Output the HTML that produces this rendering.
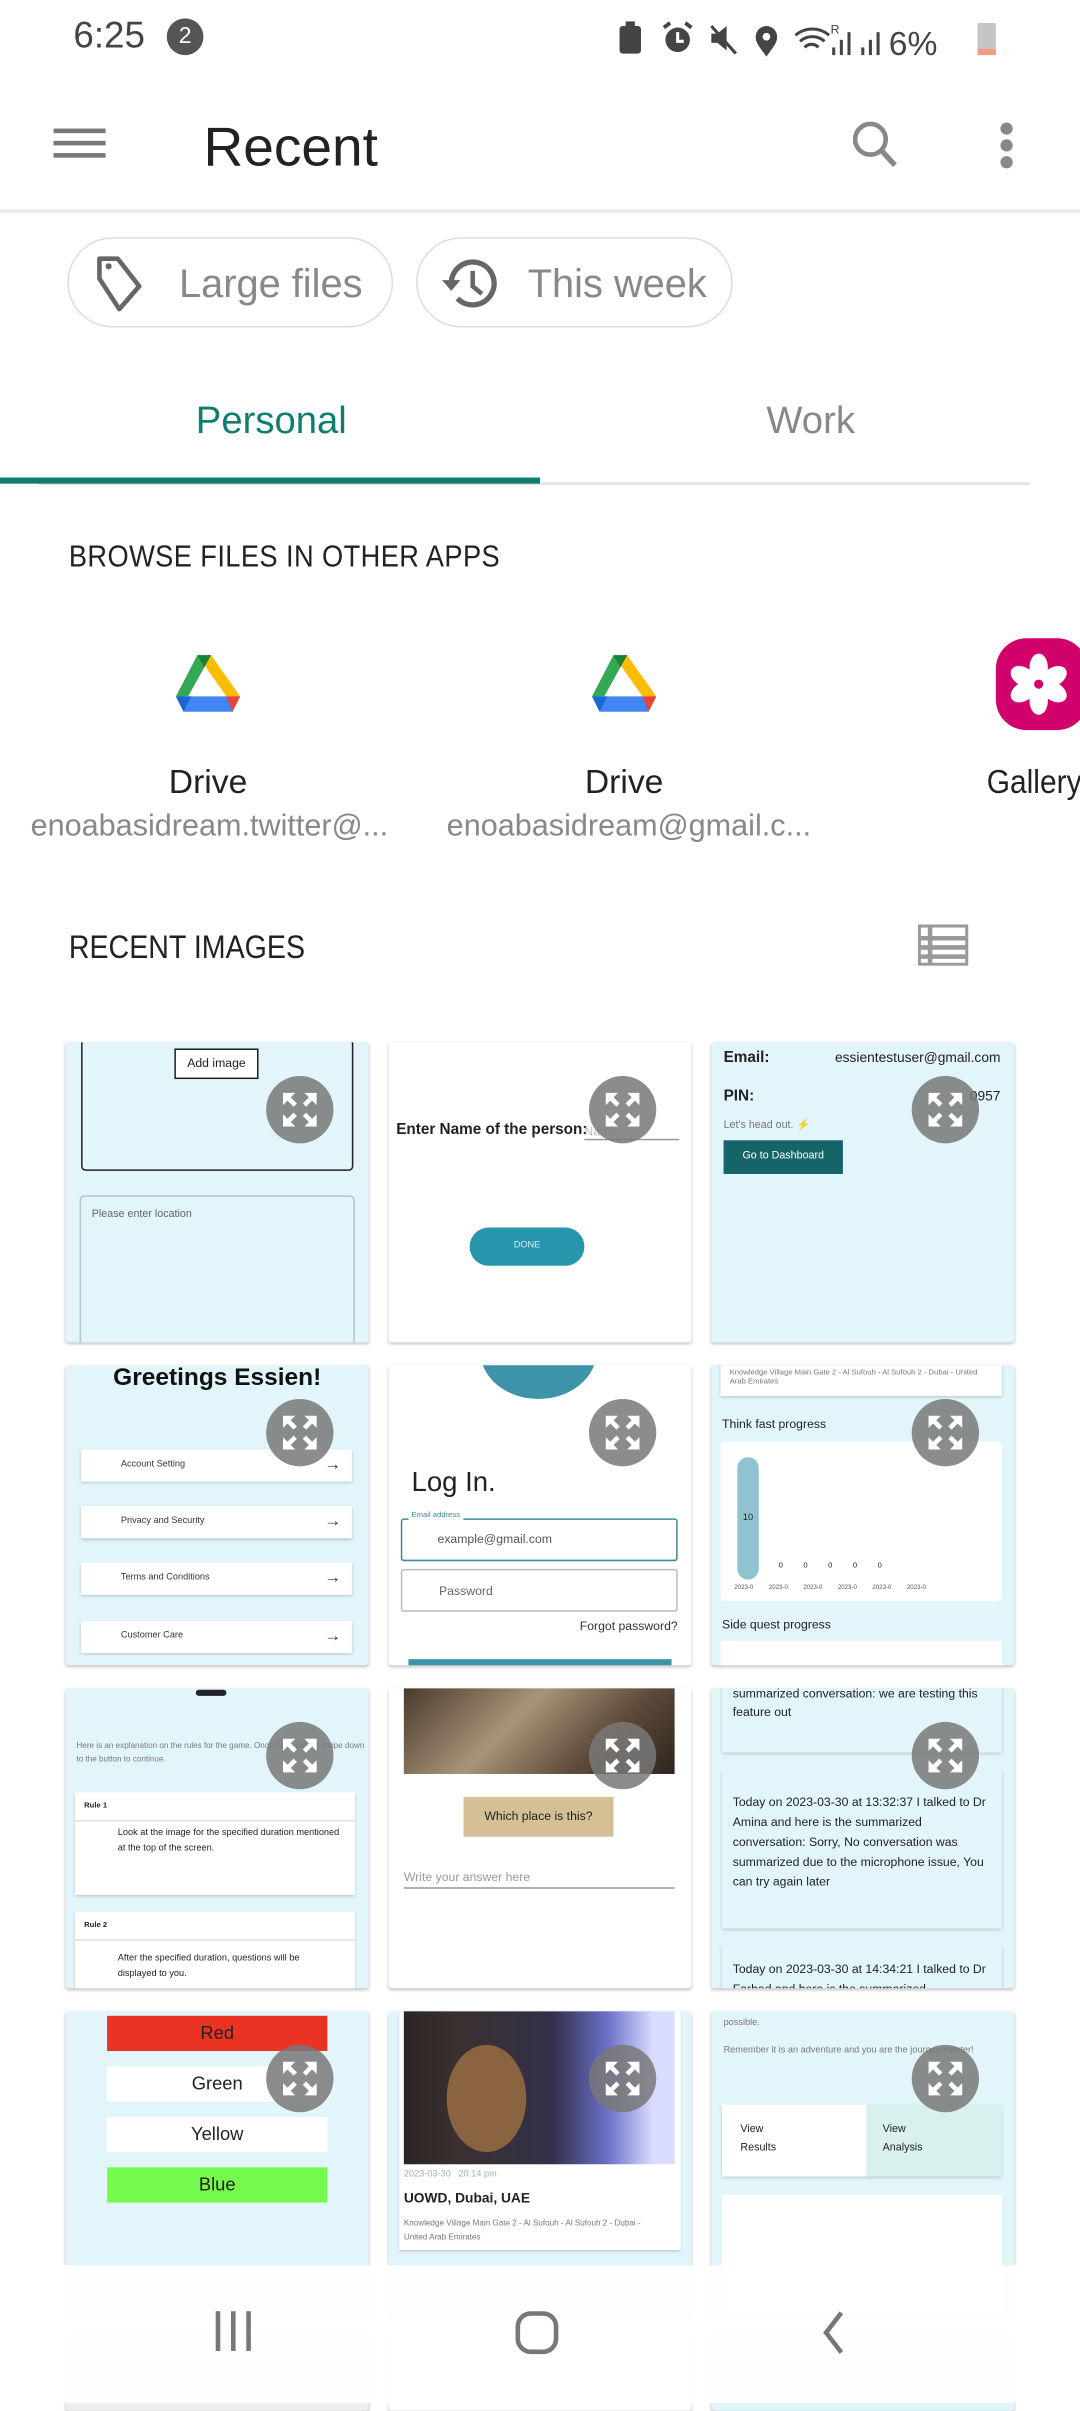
<!DOCTYPE html>
<html><head><meta charset="utf-8">
<style>
*{margin:0;padding:0;box-sizing:border-box}
html,body{width:1080px;height:2400px;overflow:hidden;background:#fff}
#w{position:absolute;left:0;top:0;width:706px;height:1569px;transform:scale(1.52975,1.5306);transform-origin:0 0;font-family:"Liberation Sans Narrow","Liberation Sans",sans-serif;color:#222}
.a{position:absolute}
.t{position:absolute;border-radius:2px;overflow:hidden;box-shadow:0 1px 2px rgba(0,0,0,.25);font-family:"Liberation Sans",sans-serif}
.lb{background:#e2f5fa}.wh{background:#fff}
.ex{position:absolute;width:44px;height:44px;border-radius:50%;background:rgba(120,120,120,.85);left:131px;top:22px}
.ex svg{position:absolute;left:9px;top:9px}
.card{position:absolute;background:#fff;box-shadow:0 1px 2px rgba(0,0,0,.2)}
.s{font-size:6px;color:#333}
.n{transform:scaleX(.89);transform-origin:0 0;white-space:nowrap}
</style></head><body><div id="w">

<!-- status bar -->
<div class="a" style="left:48px;top:10px;font-size:24px;color:#444">6:25</div>
<div class="a" style="left:109px;top:12px;width:24px;height:24px;border-radius:50%;background:#555;color:#fff;font-size:15px;text-align:center;line-height:24px">2</div>
<svg class="a" style="left:403px;top:12px" width="260" height="28" viewBox="0 0 260 28">
<rect x="2" y="5" width="14" height="18" rx="2" fill="#444"/><rect x="6" y="2" width="6" height="3" fill="#444"/>
<circle cx="40" cy="14" r="8" fill="#444"/><path d="M40 9v6h4" stroke="#fff" stroke-width="2" fill="none"/><path d="M31 6l4-3M49 6l-4-3" stroke="#444" stroke-width="2.5"/>
<path d="M62 10h4l6-5v16l-6-5h-4z" fill="#444"/><path d="M62 5l16 18" stroke="#444" stroke-width="2"/>
<path d="M98 25c-5-7-7-9-7-13a7 7 0 0 1 14 0c0 4-2 6-7 13z" fill="#444"/><circle cx="98" cy="12" r="2.5" fill="#fff"/>
<path d="M117 11a17 17 0 0 1 22 0M120 15a12 12 0 0 1 16 0M123 19a6 6 0 0 1 9 0" stroke="#444" stroke-width="2" fill="none"/>
<text x="140" y="10" font-size="8" fill="#444" font-family="Liberation Sans">R</text>
<rect x="141" y="19" width="2" height="5" fill="#444"/><rect x="146" y="14" width="2" height="10" fill="#444"/><rect x="151" y="9" width="2" height="15" fill="#444"/>
<rect x="160" y="19" width="2" height="5" fill="#444"/><rect x="165" y="14" width="2" height="10" fill="#444"/><rect x="170" y="9" width="2" height="15" fill="#444"/>
<text x="178" y="24" font-size="22" fill="#444" font-family="Liberation Sans">6%</text>
<rect x="236" y="3" width="12" height="21" rx="1" fill="#c4c4c4"/><rect x="236" y="20" width="12" height="4" fill="#f39b7f"/>
</svg>

<!-- app bar -->
<div class="a" style="left:35px;top:84px;width:34px;height:3px;background:#777;box-shadow:0 8px 0 #777,0 16px 0 #777"></div>
<div class="a" style="left:133px;top:75px;font-size:36px;color:#222">Recent</div>
<svg class="a" style="left:555px;top:77px" width="36" height="36" viewBox="0 0 36 36"><circle cx="14" cy="14" r="10" stroke="#888" stroke-width="3" fill="none"/><path d="M21 21l9 10" stroke="#888" stroke-width="3.5"/></svg>
<div class="a" style="left:654px;top:80px;width:8px;height:8px;border-radius:50%;background:#888;box-shadow:0 11px 0 #888,0 22px 0 #888"></div>
<div class="a" style="left:0;top:137px;width:706px;height:2px;background:#e8e8e8"></div>

<!-- chips -->
<div class="a" style="left:44px;top:155px;width:213px;height:59px;border:1.5px solid #ddd;border-radius:30px"></div>
<svg class="a" style="left:60px;top:164px" width="42" height="42" viewBox="0 0 42 42"><path d="M5 5h12l14 18-13 15-13-20z" stroke="#666" stroke-width="3" fill="none" stroke-linejoin="round"/><circle cx="11" cy="10" r="2" fill="#666"/></svg>
<div class="a" style="left:117px;top:170px;font-size:26px;color:#888">Large files</div>
<div class="a" style="left:272px;top:155px;width:207px;height:59px;border:1.5px solid #ddd;border-radius:30px"></div>
<svg class="a" style="left:288px;top:166px" width="40" height="40" viewBox="0 0 40 40"><path d="M7 19a14 14 0 1 1 4 10" stroke="#666" stroke-width="3.5" fill="none"/><path d="M1 17l6 7 6-7z" fill="#666"/><path d="M21 11v10l6 5" stroke="#666" stroke-width="3" fill="none"/></svg>
<div class="a" style="left:345px;top:170px;font-size:26px;color:#888">This week</div>

<div class="a" style="left:0;top:3px;width:706px;height:1480px">
<!-- tabs -->
<div class="a" style="left:128px;top:258px;font-size:25px;color:#0f7e6f">Personal</div>
<div class="a" style="left:501px;top:258px;font-size:25px;color:#888">Work</div>
<div class="a" style="left:25px;top:312px;width:648px;height:2px;background:#e4e4e4"></div>
<div class="a" style="left:0;top:309px;width:353px;height:4px;background:#0f7e6f"></div>

<div class="a n" style="left:45px;top:350px;font-size:20px;color:#222;letter-spacing:.3px">BROWSE FILES IN OTHER APPS</div>

<!-- drive icons -->
<svg class="a" style="left:115px;top:424px" width="42" height="40" viewBox="0 0 42 40"><path d="M14 1h9L8 28H0z" fill="#34a853"/><path d="M14 1h9l19 27h-9z" fill="#fbbc04"/><path d="M0 28h42l-5 10H5z" fill="#4285f4"/><path d="M33 28h9l-5 10z" fill="#ea4335"/><path d="M0 28l5 10 5-10z" fill="#1967d2"/><path d="M14 1h9l-4.5 8z" fill="#188038"/></svg>
<svg class="a" style="left:387px;top:424px" width="42" height="40" viewBox="0 0 42 40"><path d="M14 1h9L8 28H0z" fill="#34a853"/><path d="M14 1h9l19 27h-9z" fill="#fbbc04"/><path d="M0 28h42l-5 10H5z" fill="#4285f4"/><path d="M33 28h9l-5 10z" fill="#ea4335"/><path d="M0 28l5 10 5-10z" fill="#1967d2"/><path d="M14 1h9l-4.5 8z" fill="#188038"/></svg>
<div class="a" style="left:651px;top:414px;width:60px;height:60px;border-radius:20px;background:#d1006b"></div>
<svg class="a" style="left:657px;top:421px" width="44" height="46" viewBox="0 0 44 46"><g fill="#fff"><ellipse cx="22" cy="12" rx="6" ry="9"/><ellipse cx="22" cy="34" rx="6" ry="9"/><ellipse cx="12" cy="18" rx="6" ry="9" transform="rotate(-60 12 18)"/><ellipse cx="32" cy="18" rx="6" ry="9" transform="rotate(60 32 18)"/><ellipse cx="12" cy="28" rx="6" ry="9" transform="rotate(60 12 28)"/><ellipse cx="32" cy="28" rx="6" ry="9" transform="rotate(-60 32 28)"/></g><circle cx="22" cy="23" r="3" fill="#d1006b"/></svg>
<div class="a" style="left:0;top:495px;width:272px;text-align:center;font-size:22px;color:#222">Drive</div>
<div class="a" style="left:20px;top:526px;font-size:20px;color:#888">enoabasidream.twitter@...</div>
<div class="a" style="left:272px;top:495px;width:272px;text-align:center;font-size:22px;color:#222">Drive</div>
<div class="a" style="left:292px;top:526px;font-size:20px;color:#888">enoabasidream@gmail.c...</div>
<div class="a n" style="left:645px;top:495px;font-size:22px;color:#222">Gallery</div>

<div class="a n" style="left:45px;top:605px;font-size:21px;color:#222">RECENT IMAGES</div>
<svg class="a" style="left:600px;top:601px" width="33" height="27" viewBox="0 0 33 27"><rect x="1" y="1" width="31" height="25" fill="none" stroke="#999" stroke-width="2"/><path d="M1 9h31M1 15h31M1 21h31M8 1v25" stroke="#999" stroke-width="3"/></svg>

<!-- row1 -->
<div class="t lb" style="left:43px;top:678px;width:198px;height:196px">
 <div class="a" style="left:10px;top:-2px;width:178px;height:86px;border:1.5px solid #222;border-radius:3px"></div>
 <div class="a" style="left:71px;top:4px;width:55px;height:20px;border:1.5px solid #222;font-size:8px;text-align:center;line-height:17px;background:#fff">Add image</div>
 <div class="a" style="left:9px;top:100px;width:180px;height:100px;border:1px solid #b4c8cf;border-radius:3px;font-size:7px;color:#666;padding:8px 7px">Please enter location</div>
 <div class="ex"><svg width="26" height="26" viewBox="0 0 26 26"><path d="M2 2h8L2 10zM24 2h-8l8 8zM2 24h8l-8-8zM24 24h-8l8-8z" fill="#fff"/><path d="M3 3l7 7M23 3l-7 7M3 23l7-7M23 23l-7-7" stroke="#fff" stroke-width="3"/></svg></div>
</div>
<div class="t wh" style="left:254px;top:678px;width:198px;height:196px">
 <div class="a" style="left:5px;top:52px;font-size:10px;font-weight:bold;color:#222">Enter Name of the person:</div>
 <div class="a" style="left:128px;top:54px;width:62px;border-bottom:1px solid #999;font-size:8px;color:#bbb">Name</div>
 <div class="a" style="left:53px;top:121px;width:75px;height:25px;border-radius:13px;background:#2596ab;color:#cfeff5;font-size:6px;text-align:center;line-height:25px">DONE</div>
 <div class="ex"><svg width="26" height="26" viewBox="0 0 26 26"><path d="M2 2h8L2 10zM24 2h-8l8 8zM2 24h8l-8-8zM24 24h-8l8-8z" fill="#fff"/><path d="M3 3l7 7M23 3l-7 7M3 23l7-7M23 23l-7-7" stroke="#fff" stroke-width="3"/></svg></div>
</div>
<div class="t lb" style="left:465px;top:678px;width:198px;height:196px">
 <div class="a" style="left:8px;top:5px;font-size:10px;font-weight:bold">Email:</div>
 <div class="a" style="right:9px;top:5px;font-size:9px">essientestuser@gmail.com</div>
 <div class="a" style="left:8px;top:30px;font-size:10px;font-weight:bold">PIN:</div>
 <div class="a" style="right:9px;top:30px;font-size:9px">0957</div>
 <div class="a" style="left:8px;top:50px;font-size:7px;color:#777">Let's head out. <span style="color:#f5c518">⚡</span></div>
 <div class="a" style="left:8px;top:64px;width:78px;height:22px;background:#15646a;color:#fff;font-size:7px;line-height:22px;text-align:center">Go to Dashboard</div>
 <div class="ex"><svg width="26" height="26" viewBox="0 0 26 26"><path d="M2 2h8L2 10zM24 2h-8l8 8zM2 24h8l-8-8zM24 24h-8l8-8z" fill="#fff"/><path d="M3 3l7 7M23 3l-7 7M3 23l7-7M23 23l-7-7" stroke="#fff" stroke-width="3"/></svg></div>
</div>

<!-- row2 -->
<div class="t lb" style="left:43px;top:889px;width:198px;height:196px">
 <div class="a" style="left:0;top:0;width:198px;text-align:center;font-size:16px;font-weight:bold;color:#111">Greetings Essien!</div>
 <div class="card s" style="left:10px;top:55px;width:177px;height:21px;line-height:21px;padding-left:26px">Account Setting<span style="position:absolute;right:7px;font-size:11px">→</span></div>
 <div class="card s" style="left:10px;top:92px;width:177px;height:21px;line-height:21px;padding-left:26px">Privacy and Security<span style="position:absolute;right:7px;font-size:11px">→</span></div>
 <div class="card s" style="left:10px;top:129px;width:177px;height:21px;line-height:21px;padding-left:26px">Terms and Conditions<span style="position:absolute;right:7px;font-size:11px">→</span></div>
 <div class="card s" style="left:10px;top:167px;width:177px;height:21px;line-height:21px;padding-left:26px">Customer Care<span style="position:absolute;right:7px;font-size:11px">→</span></div>
 <div class="ex"><svg width="26" height="26" viewBox="0 0 26 26"><path d="M2 2h8L2 10zM24 2h-8l8 8zM2 24h8l-8-8zM24 24h-8l8-8z" fill="#fff"/><path d="M3 3l7 7M23 3l-7 7M3 23l7-7M23 23l-7-7" stroke="#fff" stroke-width="3"/></svg></div>
</div>
<div class="t wh" style="left:254px;top:889px;width:198px;height:196px">
 <div class="a" style="left:60px;top:-40px;width:76px;height:62px;border-radius:50%;background:#3d93a8"></div>
 <div class="a" style="left:15px;top:66px;font-size:18px;color:#222">Log In.</div>
 <div class="a" style="left:8px;top:100px;width:181px;height:28px;border:1.5px solid #3b8c97;border-radius:2px;font-size:8px;color:#555;padding:8px 0 0 23px">example@gmail.com</div>
 <div class="a" style="left:13px;top:95px;font-size:5px;color:#3b8c97;background:#fff;padding:0 2px">Email address</div>
 <div class="a" style="left:8px;top:133px;width:181px;height:28px;border:1px solid #bbb;border-radius:2px;font-size:8px;color:#666;padding:9px 0 0 24px">Password</div>
 <div class="a" style="right:9px;top:166px;font-size:8px;color:#333">Forgot password?</div>
 <div class="a" style="left:13px;top:192px;width:172px;height:6px;background:#3d93a8"></div>
 <div class="ex"><svg width="26" height="26" viewBox="0 0 26 26"><path d="M2 2h8L2 10zM24 2h-8l8 8zM2 24h8l-8-8zM24 24h-8l8-8z" fill="#fff"/><path d="M3 3l7 7M23 3l-7 7M3 23l7-7M23 23l-7-7" stroke="#fff" stroke-width="3"/></svg></div>
</div>
<div class="t lb" style="left:465px;top:889px;width:198px;height:196px">
 <div class="card" style="left:6px;top:-2px;width:184px;height:22px;font-size:5px;color:#777;padding:4px 6px">Knowledge Village Main Gate 2 - Al Sufouh - Al Sufouh 2 - Dubai - United Arab Emirates</div>
 <div class="a" style="left:7px;top:34px;font-size:8px;color:#222">Think fast progress</div>
 <div class="a" style="left:6px;top:50px;width:184px;height:104px;background:#fff;border-radius:3px"></div>
 <div class="a" style="left:17px;top:60px;width:14px;height:80px;border-radius:7px;background:#8ec3cf;font-size:6px;text-align:center;line-height:80px">10</div>
 <div class="a" style="left:44px;top:128px;width:105px;font-size:5px;word-spacing:12px;white-space:nowrap">0 0 0 0 0</div>
 <div class="a" style="left:15px;top:142px;font-size:4px;color:#555;word-spacing:9px;white-space:nowrap">2023-0 2023-0 2023-0 2023-0 2023-0 2023-0</div>
 <div class="a" style="left:7px;top:165px;font-size:8px;color:#222">Side quest progress</div>
 <div class="a" style="left:6px;top:180px;width:184px;height:20px;background:#fff"></div>
 <div class="ex"><svg width="26" height="26" viewBox="0 0 26 26"><path d="M2 2h8L2 10zM24 2h-8l8 8zM2 24h8l-8-8zM24 24h-8l8-8z" fill="#fff"/><path d="M3 3l7 7M23 3l-7 7M3 23l7-7M23 23l-7-7" stroke="#fff" stroke-width="3"/></svg></div>
</div>

<!-- row3 -->
<div class="t lb" style="left:43px;top:1100px;width:198px;height:196px">
 <div class="a" style="left:85px;top:1px;width:20px;height:4px;border-radius:2px;background:#223"></div>
 <div class="a" style="left:7px;top:34px;font-size:5.3px;color:#778;line-height:9px;width:190px">Here is an explanation on the rules for the game. Once done please swipe down to the button to continue.</div>
 <div class="card" style="left:6px;top:68px;width:183px;height:67px"><div style="font-size:5px;font-weight:bold;padding:6px 6px;border-bottom:1px solid #ddd">Rule 1</div><div style="font-size:6px;line-height:10px;padding:3px 10px 0 28px">Look at the image for the specified duration mentioned at the top of the screen.</div></div>
 <div class="card" style="left:6px;top:146px;width:183px;height:60px"><div style="font-size:5px;font-weight:bold;padding:6px 6px;border-bottom:1px solid #ddd">Rule 2</div><div style="font-size:6px;line-height:10px;padding:7px 10px 0 28px">After the specified duration, questions will be displayed to you.</div></div>
 <div class="ex"><svg width="26" height="26" viewBox="0 0 26 26"><path d="M2 2h8L2 10zM24 2h-8l8 8zM2 24h8l-8-8zM24 24h-8l8-8z" fill="#fff"/><path d="M3 3l7 7M23 3l-7 7M3 23l7-7M23 23l-7-7" stroke="#fff" stroke-width="3"/></svg></div>
</div>
<div class="t wh" style="left:254px;top:1100px;width:198px;height:196px">
 <div class="a" style="left:10px;top:0;width:177px;height:56px;background:linear-gradient(135deg,#4a3a2c,#a89479 40%,#5e4b3a 70%,#2d241d)"></div>
 <div class="a" style="left:49px;top:71px;width:98px;height:26px;background:#d3c195;font-size:8px;text-align:center;line-height:26px">Which place is this?</div>
 <div class="a" style="left:10px;top:119px;width:177px;border-bottom:1px solid #999;font-size:8px;color:#999;padding-bottom:2px">Write your answer here</div>
 <div class="ex"><svg width="26" height="26" viewBox="0 0 26 26"><path d="M2 2h8L2 10zM24 2h-8l8 8zM2 24h8l-8-8zM24 24h-8l8-8z" fill="#fff"/><path d="M3 3l7 7M23 3l-7 7M3 23l7-7M23 23l-7-7" stroke="#fff" stroke-width="3"/></svg></div>
</div>
<div class="t lb" style="left:465px;top:1100px;width:198px;height:196px">
 <div class="card" style="left:7px;top:-5px;width:183px;height:47px;background:#e2f5fa;font-size:8px;line-height:12px;padding:3px 7px">summarized conversation: we are testing this feature out</div>
 <div class="card" style="left:7px;top:54px;width:183px;height:103px;background:#e2f5fa;font-size:8px;line-height:13px;padding:14px 7px 0">Today on 2023-03-30 at 13:32:37 I talked to Dr Amina and here is the summarized conversation: Sorry, No conversation was summarized due to the microphone issue, You can try again later</div>
 <div class="card" style="left:7px;top:168px;width:183px;height:40px;background:#e2f5fa;font-size:8px;line-height:13px;padding:9px 7px 0">Today on 2023-03-30 at 14:34:21 I talked to Dr Farhad and here is the summarized conversation: Sorry, No</div>
 <div class="ex"><svg width="26" height="26" viewBox="0 0 26 26"><path d="M2 2h8L2 10zM24 2h-8l8 8zM2 24h8l-8-8zM24 24h-8l8-8z" fill="#fff"/><path d="M3 3l7 7M23 3l-7 7M3 23l7-7M23 23l-7-7" stroke="#fff" stroke-width="3"/></svg></div>
</div>

<!-- row4 -->
<div class="t lb" style="left:43px;top:1311px;width:198px;height:200px">
 <div class="a" style="left:27px;top:3px;width:144px;height:23px;background:#ea3323;font-size:12px;text-align:center;line-height:23px">Red</div>
 <div class="a" style="left:27px;top:36px;width:144px;height:23px;background:#fff;font-size:12px;text-align:center;line-height:23px">Green</div>
 <div class="a" style="left:27px;top:69px;width:144px;height:23px;background:#fff;font-size:12px;text-align:center;line-height:23px">Yellow</div>
 <div class="a" style="left:27px;top:102px;width:144px;height:23px;background:#75fb4c;font-size:12px;text-align:center;line-height:23px">Blue</div>
 <div class="ex"><svg width="26" height="26" viewBox="0 0 26 26"><path d="M2 2h8L2 10zM24 2h-8l8 8zM2 24h8l-8-8zM24 24h-8l8-8z" fill="#fff"/><path d="M3 3l7 7M23 3l-7 7M3 23l7-7M23 23l-7-7" stroke="#fff" stroke-width="3"/></svg></div>
</div>
<div class="t lb" style="left:254px;top:1311px;width:198px;height:200px">
 <div class="card" style="left:7px;top:0;width:184px;height:156px"></div>
 <div class="a" style="left:10px;top:0;width:177px;height:100px;background:linear-gradient(90deg,#2a2624 0,#3b3030 20%,#32304a 55%,#6a6fc8 75%,#d9dcff 92%)"></div>
 <div class="a" style="left:38px;top:22px;width:52px;height:70px;border-radius:50%;background:#8a6440"></div>
 <div class="a" style="left:10px;top:104px;font-size:6px;color:#aaa">2023-03-30 &nbsp; 20:14 pm</div>
 <div class="a" style="left:10px;top:117px;font-size:9px;font-weight:bold;color:#222">UOWD, Dubai, UAE</div>
 <div class="a" style="left:10px;top:135px;font-size:5.3px;color:#777;line-height:9px;width:170px">Knowledge Village Main Gate 2 - Al Sufouh - Al Sufouh 2 - Dubai - United Arab Emirates</div>
 <div class="ex"><svg width="26" height="26" viewBox="0 0 26 26"><path d="M2 2h8L2 10zM24 2h-8l8 8zM2 24h8l-8-8zM24 24h-8l8-8z" fill="#fff"/><path d="M3 3l7 7M23 3l-7 7M3 23l7-7M23 23l-7-7" stroke="#fff" stroke-width="3"/></svg></div>
</div>
<div class="t lb" style="left:465px;top:1311px;width:198px;height:200px">
 <div class="a" style="left:8px;top:4px;font-size:6px;color:#777;line-height:9px;width:180px">possible.<br><br>Remember it is an adventure and you are the journey master!</div>
 <div class="card" style="left:7px;top:61px;width:95px;height:47px;font-size:7px;padding:11px 12px;line-height:12px">View<br>Results</div>
 <div class="card" style="left:102px;top:61px;width:88px;height:47px;background:#d8f1ee;font-size:7px;padding:11px 10px;line-height:12px">View<br>Analysis</div>
 <div class="a" style="left:7px;top:120px;width:183px;height:80px;background:#fff"></div>
 <div class="ex"><svg width="26" height="26" viewBox="0 0 26 26"><path d="M2 2h8L2 10zM24 2h-8l8 8zM2 24h8l-8-8zM24 24h-8l8-8z" fill="#fff"/><path d="M3 3l7 7M23 3l-7 7M3 23l7-7M23 23l-7-7" stroke="#fff" stroke-width="3"/></svg></div>
</div>
</div>
<!-- row5 partial -->
<div class="t" style="left:43px;top:1525px;width:198px;height:50px;background:#eee"></div>
<div class="t wh" style="left:254px;top:1525px;width:198px;height:50px"></div>
<div class="t lb" style="left:465px;top:1525px;width:198px;height:50px"></div>

<!-- nav bar overlay -->
<div class="a" style="left:0;top:1480px;width:706px;height:90px;background:rgba(255,255,255,.92)"></div>
<div class="a" style="left:141px;top:1510px;width:3px;height:26px;background:#777;box-shadow:10px 0 0 #777,20px 0 0 #777"></div>
<div class="a" style="left:337px;top:1510px;width:28px;height:28px;border:3px solid #777;border-radius:10px"></div>
<svg class="a" style="left:535px;top:1508px" width="20" height="32" viewBox="0 0 20 32"><path d="M15 3L5 16l10 13" stroke="#777" stroke-width="3" fill="none"/></svg>
</div></body></html>
